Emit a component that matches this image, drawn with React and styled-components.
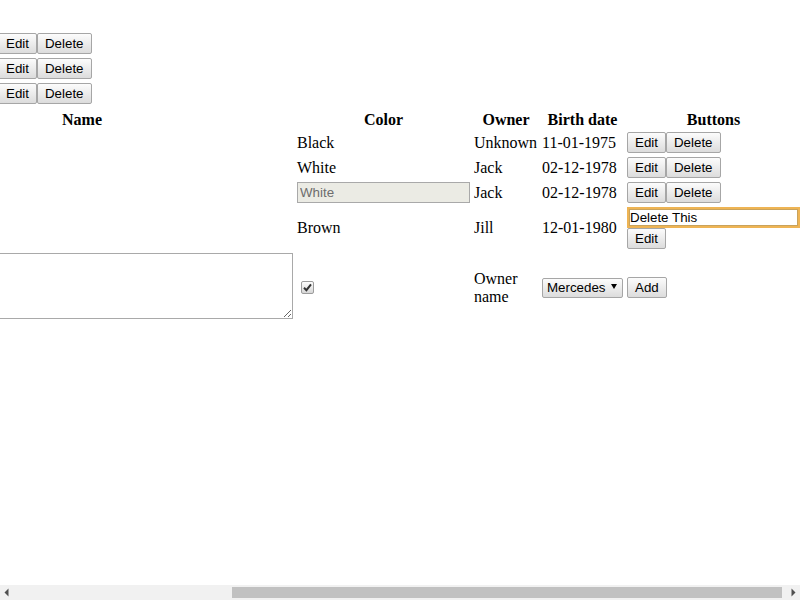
import React from "react";
import styled, { createGlobalStyle } from "styled-components";

const Global = createGlobalStyle`
  html { background: #fff; overflow: hidden; }
  body {
    margin: 0;
    padding: 8px;
    overflow: hidden;
    font-family: "Liberation Serif", "Times New Roman", serif;
    font-size: 16px;
    color: #000;
  }
`;

/* The page is shown scrolled to the right: its left part lies past the left edge. */
const Page = styled.div`
  margin-left: -140px;
  padding-top: 25px;
`;

const CarList = styled.div`
  display: flex;
  flex-direction: column;
  gap: 4px;
  padding-left: 130px;
  margin-bottom: 4px;
`;

const Actions = styled.div`
  display: flex;
  flex-wrap: ${(p) => (p.$wrap ? "wrap" : "nowrap")};
  align-items: flex-start;
`;

const Button = styled.button`
  box-sizing: border-box;
  height: 21px;
  margin: 0;
  padding: 2px 7px;
  font-family: "Liberation Sans", Arial, sans-serif;
  font-size: 13.333px;
  line-height: 15px;
  color: #000;
  border: 1px solid #a6a6a6;
  border-radius: 2px;
  background: linear-gradient(#fcfcfc, #dcdcdc);
  cursor: default;
`;

const Table = styled.table`
  border-collapse: separate;
  border-spacing: 2px;
  font-size: 16px;
  line-height: 18px;
`;

const Th = styled.th`
  padding: 1px;
  font-weight: bold;
  line-height: 17px;
  text-align: center;
`;

const HeadLabel = styled.div`
  min-width: ${(p) => p.$w}px;
`;

const Td = styled.td`
  padding: 1px;
  vertical-align: middle;
  text-align: left;
`;

const TextInput = styled.input`
  display: block;
  box-sizing: border-box;
  width: 173px;
  height: 21px;
  margin: 0;
  padding: 0 ${(p) => (p.$focused ? 1 : 2)}px;
  font-family: "Liberation Sans", Arial, sans-serif;
  font-size: 13.333px;
  color: ${(p) => (p.disabled ? "#6d6d6d" : "#000")};
  -webkit-text-fill-color: ${(p) => (p.disabled ? "#6d6d6d" : "#000")};
  background: ${(p) => (p.disabled ? "#ebebe4" : "#fff")};
  border: ${(p) => (p.$focused ? "2px solid #eeb454" : "1px solid #a9a9a9")};
  box-shadow: ${(p) => (p.$focused ? "inset 0 0 0 1px #c9a35c" : "none")};
  outline: none;
  opacity: 1;
`;

const NotesArea = styled.textarea`
  display: block;
  box-sizing: border-box;
  width: 422px;
  height: 66px;
  margin: 0 0 3px;
  padding: 2px;
  border: 1px solid #a9a9a9;
  background: #fff;
  font-family: "Liberation Mono", monospace;
  font-size: 13.333px;
`;

const CheckBox = styled.span`
  display: flex;
  align-items: center;
  justify-content: center;
  box-sizing: border-box;
  width: 13px;
  height: 13px;
  margin-left: 4px;
  border: 1px solid #9c9c9c;
  border-radius: 2px;
  background: linear-gradient(#fdfdfd, #d6d6d6);
`;

const SelectWrap = styled.span`
  position: relative;
  display: block;
  width: 81px;
`;

const Select = styled.select`
  display: block;
  box-sizing: border-box;
  width: 81px;
  height: 20px;
  margin: 0;
  padding: 0 14px 0 4px;
  appearance: none;
  -webkit-appearance: none;
  font-family: "Liberation Sans", Arial, sans-serif;
  font-size: 13.333px;
  color: #000;
  border: 1px solid #a6a6a6;
  border-radius: 2px;
  background: linear-gradient(#fcfcfc, #dcdcdc);
  outline: none;
`;

const SelectArrow = styled.svg`
  position: absolute;
  right: 6px;
  top: 6px;
  pointer-events: none;
`;

/* Horizontal scrollbar of the window, drawn over the bottom edge */
const ScrollBar = styled.div`
  position: fixed;
  left: 0;
  right: 0;
  bottom: 0;
  height: 15px;
  display: flex;
  background: #f1f1f1;
`;

const ScrollArrow = styled.svg`
  flex: none;
  display: block;
`;

const ScrollTrack = styled.div`
  flex: 1;
  display: flex;
  align-items: center;
`;

const ScrollThumb = styled.div`
  height: 11px;
  background: #c1c1c1;
`;

const columns = [
  { label: "Name", width: 422 },
  { label: "Color", width: 173 },
  { label: "Owner", width: 64 },
  { label: "Birth date", width: 81 },
  { label: "Buttons", width: 173 },
];

const rows = [
  { color: "Black", owner: "Unknown", date: "11-01-1975", mode: "view" },
  { color: "White", owner: "Jack", date: "02-12-1978", mode: "view" },
  { color: "White", owner: "Jack", date: "02-12-1978", mode: "edit" },
  { color: "Brown", owner: "Jill", date: "12-01-1980", mode: "delete" },
];

const scroll = { offset: 217, thumb: 550 };

function EditDelete() {
  return (
    <Actions>
      <Button>Edit</Button>
      <Button>Delete</Button>
    </Actions>
  );
}

export default function App() {
  return (
    <>
      <Global />
      <Page>
        <CarList>
          <EditDelete />
          <EditDelete />
          <EditDelete />
        </CarList>
        <Table>
          <thead>
            <tr>
              {columns.map((c) => (
                <Th key={c.label}>
                  <HeadLabel $w={c.width}>{c.label}</HeadLabel>
                </Th>
              ))}
            </tr>
          </thead>
          <tbody>
            {rows.map((r, i) => (
              <tr key={i}>
                <Td />
                <Td>
                  {r.mode === "edit" ? (
                    <TextInput disabled defaultValue={r.color} />
                  ) : (
                    r.color
                  )}
                </Td>
                <Td>{r.owner}</Td>
                <Td>{r.date}</Td>
                <Td>
                  {r.mode === "delete" ? (
                    <Actions $wrap>
                      <TextInput $focused defaultValue="Delete This" />
                      <Button>Edit</Button>
                    </Actions>
                  ) : (
                    <EditDelete />
                  )}
                </Td>
              </tr>
            ))}
            <tr>
              <Td>
                <NotesArea />
              </Td>
              <Td>
                <CheckBox role="checkbox" aria-checked="true">
                  <svg width="9" height="9" viewBox="0 0 9 9">
                    <path
                      d="M1 4.8 L3.4 7.2 L8 1.4"
                      fill="none"
                      stroke="#333"
                      strokeWidth="2"
                    />
                  </svg>
                </CheckBox>
              </Td>
              <Td>Owner name</Td>
              <Td>
                <SelectWrap>
                  <Select defaultValue="Mercedes">
                    <option>Mercedes</option>
                  </Select>
                  <SelectArrow width="6" height="5" viewBox="0 0 6 5">
                    <polygon points="0,0 6,0 3,5" fill="#000" />
                  </SelectArrow>
                </SelectWrap>
              </Td>
              <Td>
                <Button>Add</Button>
              </Td>
            </tr>
          </tbody>
        </Table>
      </Page>
      <ScrollBar>
        <ScrollArrow width="15" height="15" viewBox="0 0 15 15">
          <polygon points="8.5,3.5 8.5,11.5 4.5,7.5" fill="#505050" />
        </ScrollArrow>
        <ScrollTrack>
          <ScrollThumb
            style={{ marginLeft: scroll.offset, width: scroll.thumb }}
          />
        </ScrollTrack>
        <ScrollArrow width="15" height="15" viewBox="0 0 15 15">
          <polygon points="6.5,3.5 6.5,11.5 10.5,7.5" fill="#505050" />
        </ScrollArrow>
      </ScrollBar>
    </>
  );
}
